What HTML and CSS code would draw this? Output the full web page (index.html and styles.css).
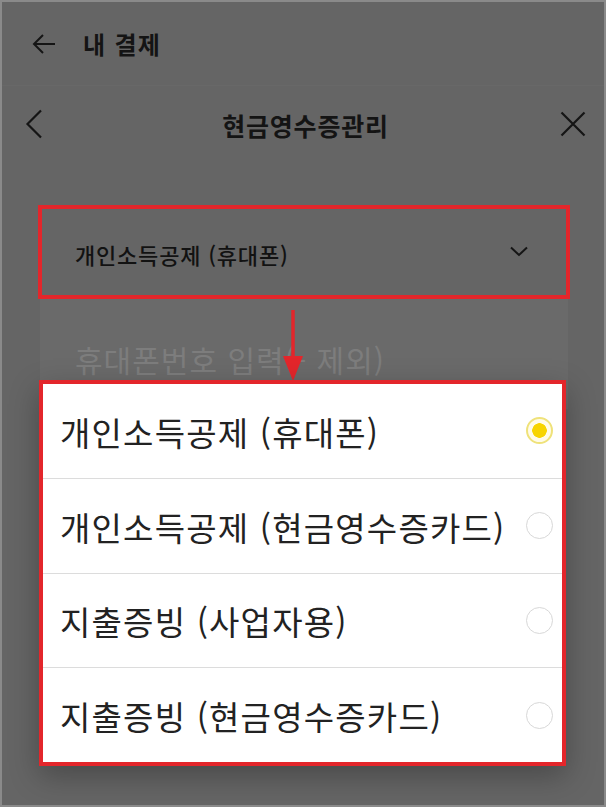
FILE: index.html
```html
<!DOCTYPE html>
<html lang="ko">
<head>
<meta charset="utf-8">
<title>현금영수증관리</title>
<link rel="stylesheet" href="styles.css">
</head>
<body>
<div class="screen">
  <div class="topbar">
    <svg class="icon-back" width="26" height="24" viewBox="0 0 26 24"><path d="M24 12H3M12 3L3 12L12 21" fill="none" stroke="#151515" stroke-width="2"/></svg>
    <span class="topbar-title">내 결제</span>
  </div>
  <div class="sheet-header">
    <svg class="icon-prev" width="18" height="30" viewBox="0 0 18 30"><path d="M16 1.5L2.5 15L16 28.5" fill="none" stroke="#151515" stroke-width="2.2"/></svg>
    <span class="sheet-title">현금영수증관리</span>
    <svg class="icon-close" width="26" height="26" viewBox="0 0 26 26"><path d="M1.5 1.5L24.5 24.5M24.5 1.5L1.5 24.5" fill="none" stroke="#151515" stroke-width="2.2"/></svg>
  </div>
  <div class="form">
    <div class="select-box">
      <span class="select-value">개인소득공제 (휴대폰)</span>
      <svg class="icon-chev" width="18" height="11" viewBox="0 0 18 11"><path d="M1 1.5L9 9L17 1.5" fill="none" stroke="#151515" stroke-width="2"/></svg>
    </div>
    <div class="input-panel">
      <span class="placeholder">휴대폰번호 입력(- 제외)</span>
    </div>
  </div>
  <svg class="pointer-arrow" width="24" height="72" viewBox="0 0 24 72"><path d="M12 0V50" stroke="#e3262b" stroke-width="3.5"/><path d="M2 46L22 46L12 71Z" fill="#e3262b"/></svg>
  <ul class="dropdown">
    <li class="option"><span>개인소득공제 (휴대폰)</span><span class="radio selected"></span></li>
    <li class="option"><span>개인소득공제 (현금영수증카드)</span><span class="radio"></span></li>
    <li class="option"><span>지출증빙 (사업자용)</span><span class="radio"></span></li>
    <li class="option"><span>지출증빙 (현금영수증카드)</span><span class="radio"></span></li>
  </ul>
</div>
</body>
</html>
```
FILE: styles.css
```css
* { box-sizing: border-box; }
html, body { margin: 0; padding: 0; }
body {
  width: 606px;
  height: 807px;
  font-family: "Noto Sans CJK KR", "Noto Sans", sans-serif;
  background: #8b8b8b;
}
.screen {
  position: relative;
  width: 606px;
  height: 807px;
  border: 2px solid #8a8a8a;
  background: #656565;
  overflow: hidden;
}
.topbar {
  height: 84px;
  display: flex;
  align-items: center;
  padding-left: 29px;
  border-bottom: 1px solid #686868;
}
.icon-back { display: block; }
.topbar-title {
  margin-left: 26px;
  font-size: 24px;
  font-weight: 700;
  color: #141414;
  letter-spacing: 1.3px;
}
.sheet-header {
  height: 76px;
  display: grid;
  grid-template-columns: 1fr auto 1fr;
  align-items: center;
  padding: 0 18px 0 23px;
}
.icon-prev { justify-self: start; }
.icon-close { justify-self: end; }
.sheet-title {
  font-size: 25px;
  font-weight: 700;
  color: #141414;
  letter-spacing: 0.8px;
  margin-top: 2px;
}
.form {
  margin: 43px 34px 0 36px;
}
.select-box {
  height: 94px;
  border: 4px solid #e3262b;
  display: flex;
  align-items: center;
  justify-content: space-between;
  padding: 0 38px 0 33px;
}
.select-value {
  font-size: 22px;
  font-weight: 500;
  color: #121212;
  letter-spacing: 0.8px;
  margin-top: 4px;
}
.icon-chev { margin-top: -2px; }
.input-panel {
  margin: 0 2px;
  height: 110px;
  background: #6a6a6a;
  padding: 38px 0 0 35px;
}
.placeholder {
  font-size: 30px;
  color: #7d7d7d;
  letter-spacing: 1px;
}
.pointer-arrow {
  position: absolute;
  left: 279px;
  top: 308px;
}
.dropdown {
  position: absolute;
  left: 37px;
  top: 378px;
  width: 527px;
  height: 386px;
  margin: 0;
  padding: 0;
  list-style: none;
  background: #fff;
  border: 4px solid #e3262b;
  box-shadow: 0 10px 28px rgba(0, 0, 0, 0.28);
  display: flex;
  flex-direction: column;
}
.option {
  flex: 1;
  display: flex;
  align-items: center;
  justify-content: space-between;
  padding: 0 9px 0 17px;
  font-size: 33px;
  letter-spacing: 1.2px;
  color: #222;
  border-top: 1px solid #dcdcdc;
}
.option:first-child { border-top: none; }
.option span:first-child { margin-top: 2px; }
.radio {
  width: 27px;
  height: 27px;
  border-radius: 50%;
  border: 1.5px solid #d8d8d8;
  flex: none;
}
.radio.selected {
  border: 2px solid #efe27a;
  background: radial-gradient(circle, #f7d400 0 7px, #fffbe8 7.5px);
}
```
